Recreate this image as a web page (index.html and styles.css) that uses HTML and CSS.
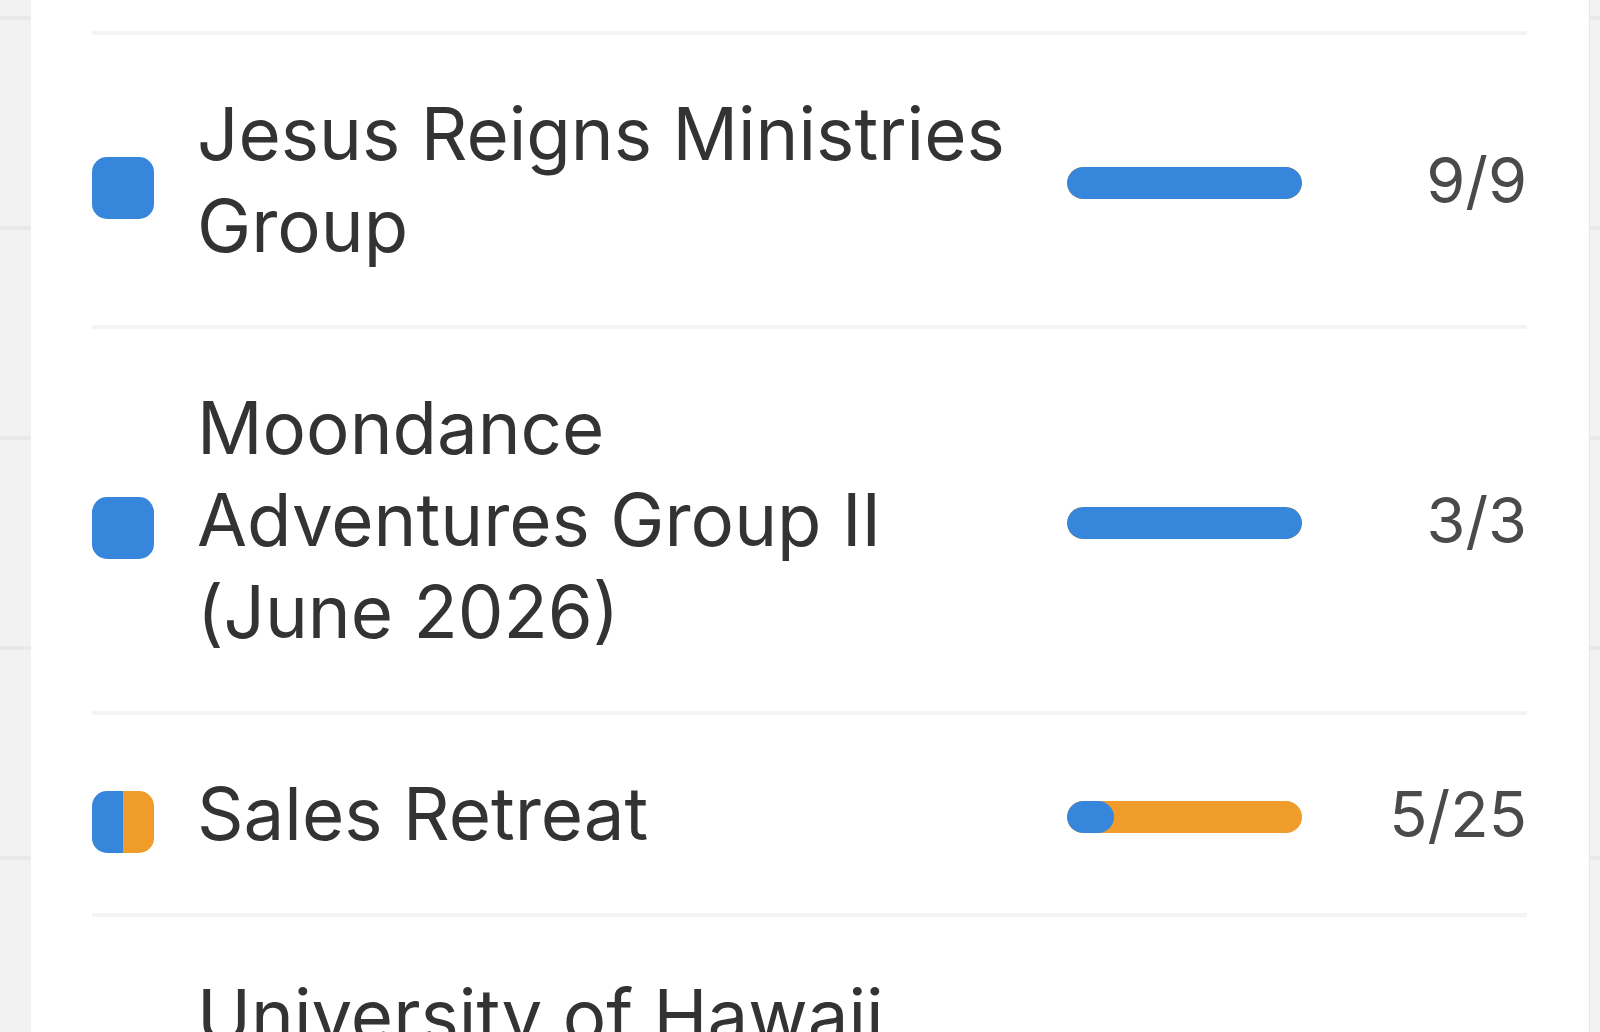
FILE: index.html
```html
<!DOCTYPE html>
<html lang="en">
<head>
    <meta charset="UTF-8">
    <title>Groups</title>
    <link rel="stylesheet" href="styles.css">
</head>
<body>
<div class="panel">
    <ul class="groups">
        <li class="group">
            <span class="swatch"></span>
            <span class="name">Jesus Reigns Ministries Group</span>
            <span class="bar"><span class="fill" style="width:100%"></span></span>
            <span class="count">9/9</span>
        </li>
        <li class="group">
            <span class="swatch"></span>
            <span class="name">Moondance Adventures Group II (June 2026)</span>
            <span class="bar"><span class="fill" style="width:100%"></span></span>
            <span class="count">3/3</span>
        </li>
        <li class="group">
            <span class="swatch split"></span>
            <span class="name">Sales Retreat</span>
            <span class="bar"><span class="fill" style="width:20%"></span></span>
            <span class="count">5/25</span>
        </li>
        <li class="group">
            <span class="swatch"></span>
            <span class="name">University of Hawaii Athletics Department</span>
            <span class="bar"><span class="fill" style="width:100%"></span></span>
            <span class="count">12/12</span>
        </li>
    </ul>
</div>
</body>
</html>
```

FILE: styles.css
```css
*{
    margin: 0;
    padding: 0;
    box-sizing: border-box;
}
html,body{
    height: 100%;
    overflow: hidden;
}
body{
    font-family: Inter, "Noto Sans", sans-serif;
    color: #333;
    background-color: #f2f2f2;
    background-image: repeating-linear-gradient(to bottom, transparent 0, transparent 16px, #e9e9e9 16px, #e9e9e9 20px, transparent 20px, transparent 210px);
}
ul{
    list-style: none;
}
.panel{
    margin: 0 10px 0 31px;
    height: 100%;
    background: #fff;
    border-right: 1px solid #e6e6e6;
    padding: 31px 62px 0 61px;
}
.group{
    display: grid;
    grid-template-columns: 62px 1fr 235px 182px;
    column-gap: 43px;
    align-items: center;
    padding: 53px 0;
    border-top: 4px solid #f4f4f4;
}
.swatch{
    width: 62px;
    height: 62px;
    border-radius: 15px;
    background: #3686dc;
    margin-top: 16px;
}
.swatch.split{
    background: linear-gradient(to right, #3686dc 50%, #f09c2a 50%);
}
.name{
    font-size: 72.6px;
    line-height: 92px;
    padding-right: 15px;
}
.bar{
    height: 32px;
    border-radius: 16px;
    background: #f09c2a;
    overflow: hidden;
    margin-top: 6px;
}
.fill{
    display: block;
    height: 100%;
    border-radius: 16px;
    background: #3686dc;
}
.count{
    font-size: 63px;
    text-align: right;
    color: #4a4a4a;
}
```
